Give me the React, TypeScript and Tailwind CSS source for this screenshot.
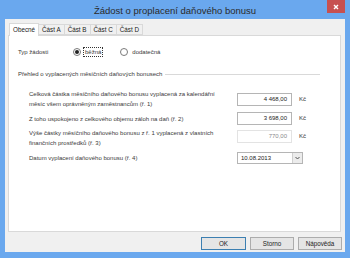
const font = { fontFamily: '"Liberation Sans", "Noto Sans", sans-serif' };

function Tab({ label, active }: { label: string; active?: boolean }) {
  if (active) {
    return (
      <div className="h-[13px] -mb-px px-[3px] bg-white border border-b-0 border-[#d9d9d9] text-[6.3px] leading-[12px] text-[#222] z-10 relative">
        {label}
      </div>
    );
  }
  return (
    <div className="h-[11px] mt-[2px] px-[3px] bg-[#f0f0f0] border border-[#d9d9d9] -ml-px text-[6.3px] leading-[10px] text-[#222]">
      {label}
    </div>
  );
}

function Radio({ label, checked }: { label: string; checked?: boolean }) {
  return (
    <div className="flex items-center gap-[2px]">
      <div className="w-[8px] h-[8px] rounded-full border border-[#7a7a7a] bg-white flex items-center justify-center">
        {checked && <div className="w-[4px] h-[4px] rounded-full bg-[#222]" />}
      </div>
      <span
        className={
          checked
            ? 'px-[1px] border border-dotted border-[#333] leading-[8px]'
            : 'px-[1px] border border-transparent leading-[8px]'
        }
      >
        {label}
      </span>
    </div>
  );
}

function Amount({ value, disabled }: { value: string; disabled?: boolean }) {
  return (
    <div className="flex items-center gap-[7px]">
      <div
        className={
          'w-[55px] h-[13px] border bg-white text-right pr-[4px] leading-[11px] ' +
          (disabled ? 'border-[#e3e3e3] text-[#8a8a8a]' : 'border-[#b5b5b5] text-[#222]')
        }
      >
        {value}
      </div>
      <span className="text-[#333]">Kč</span>
    </div>
  );
}

export default function App() {
  return (
    <div className="w-[350px] h-[258px] bg-[#6aa8ee] flex flex-col overflow-hidden" style={font}>
      <div className="h-[19px] relative flex items-center justify-center">
        <span className="text-[9.5px] text-[#2b2b2b] mt-[4px]">Žádost o proplacení daňového bonusu</span>
        <div className="absolute right-[5px] top-0 w-[18px] h-[13px] bg-[#c75050] flex items-center justify-center">
          <svg width="6" height="6" viewBox="0 0 6 6">
            <path d="M1 1L5 5M5 1L1 5" stroke="white" strokeWidth="1.4" />
          </svg>
        </div>
      </div>

      <div className="mx-[5px] mb-[6px] flex-1 bg-[#f0f0f0] flex flex-col">
        <div className="flex items-end pl-[4px] pt-[3px]">
          <Tab label="Obecné" active />
          <Tab label="Část A" />
          <Tab label="Část B" />
          <Tab label="Část C" />
          <Tab label="Část D" />
        </div>

        <div className="ml-[3px] mr-[4px] h-[197px] bg-white border border-[#d9d9d9] text-[6px] text-[#3a3a3a] pl-[9px] pr-[20px] pt-[11px]">
          <div className="flex items-center h-[10px]">
            <span className="w-[55px]">Typ žádosti</span>
            <div className="flex items-center gap-[17px]">
              <Radio label="běžná" checked />
              <Radio label="dodatečná" />
            </div>
          </div>

          <div className="flex items-center gap-[3px] mt-[12px] h-[10px]">
            <span className="whitespace-nowrap">Přehled o vyplacených měsíčních daňových bonusech</span>
            <div className="flex-1 h-px bg-[#d9d9d9]" />
          </div>

          <div className="pl-[11px] mt-[10px] flex flex-col">
            <div className="flex items-start justify-between">
              <div className="leading-[10px] whitespace-nowrap">
                Celková částka měsíčního daňového bonusu vyplacená za kalendářní
                <br />
                měsíc všem oprávněným zaměstnancům (ř. 1)
              </div>
              <div className="mt-[4px] mr-[14px]">
                <Amount value="4 468,00" />
              </div>
            </div>
            <div className="flex items-center justify-between mt-[3px]">
              <div className="leading-[10px] whitespace-nowrap">Z toho uspokojeno z celkového objemu záloh na daň (ř. 2)</div>
              <div className="mr-[14px]">
                <Amount value="3 698,00" />
              </div>
            </div>
            <div className="flex items-start justify-between mt-[3px]">
              <div className="leading-[10px] whitespace-nowrap">
                Výše částky měsíčního daňového bonusu z ř. 1 vyplacená z vlastních
                <br />
                finančních prostředků (ř. 3)
              </div>
              <div className="mt-[2px] mr-[14px]">
                <Amount value="770,00" disabled />
              </div>
            </div>
            <div className="flex items-center justify-between mt-[4px]">
              <div className="leading-[10px] whitespace-nowrap">Datum vyplacení daňového bonusu (ř. 4)</div>
              <div className="w-[66px] h-[12px] border border-[#b5b5b5] bg-white flex items-stretch mr-[17px]">
                <span className="flex-1 pl-[3px] leading-[10px] text-[#222]">10.08.2013</span>
                <div className="w-[10px] border-l border-[#d0d0d0] bg-[#ececec] flex items-center justify-center">
                  <svg width="5" height="4" viewBox="0 0 5 4">
                    <path d="M0.5 1L2.5 3L4.5 1" stroke="#555" strokeWidth="1" fill="none" />
                  </svg>
                </div>
              </div>
            </div>
          </div>
        </div>

        <div className="flex justify-end gap-[4px] mr-[3px] mt-[5px] text-[6.3px] text-[#222]">
          <div className="w-[45px] h-[13px] border border-[#3c7fb1] bg-[#e5e5e5] flex items-center justify-center">OK</div>
          <div className="w-[44px] h-[13px] border border-[#acacac] bg-[#e5e5e5] flex items-center justify-center">Storno</div>
          <div className="w-[44px] h-[13px] border border-[#acacac] bg-[#e5e5e5] flex items-center justify-center">Nápověda</div>
        </div>
      </div>
    </div>
  );
}
